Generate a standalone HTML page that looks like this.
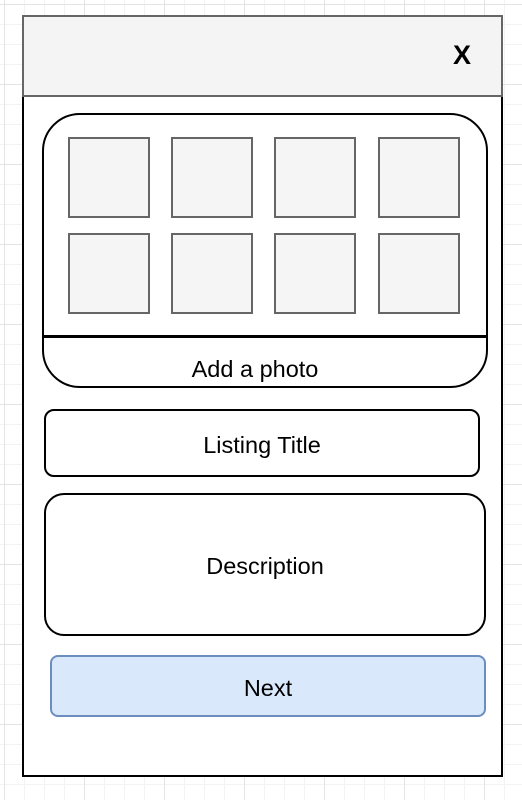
<!DOCTYPE html><html><head><style>
body{margin:0;width:522px;height:800px;position:relative;overflow:hidden;background:#fff;
background-image:linear-gradient(#e4e4e4 1px,transparent 1px),linear-gradient(90deg,#e4e4e4 1px,transparent 1px),linear-gradient(#f3f3f3 1px,transparent 1px),linear-gradient(90deg,#f3f3f3 1px,transparent 1px);
background-size:80px 80px,80px 80px,20px 20px,20px 20px;background-position:4px 4px;font-family:"Liberation Sans",sans-serif;}
div{position:absolute;box-sizing:border-box}
.t{display:flex;align-items:center;justify-content:center;font-size:23.5px;color:#000;padding-top:4px}
.sq{width:82px;height:81px;background:#f5f5f5;border:2px solid #666}
</style></head><body>
<div style="left:22px;top:95px;width:481px;height:682px;border:2px solid #000;background:#fff"></div>
<div style="left:22px;top:15px;width:481px;height:82px;border:2px solid #666;background:#f4f4f4"></div>
<div class="t" style="left:440px;top:36px;width:44px;height:34px;font-weight:bold;font-size:27px">X</div>
<div style="left:42px;top:113px;width:446px;height:275px;border:2px solid #000;border-radius:38px"></div>
<div style="left:43px;top:335px;width:444px;height:3px;background:#000"></div>
<div class="t" style="left:33px;top:352px;width:444px;height:30px">Add a photo</div>
<div class="sq" style="left:68px;top:137px"></div><div class="sq" style="left:171px;top:137px"></div><div class="sq" style="left:274px;top:137px"></div><div class="sq" style="left:378px;top:137px"></div>
<div class="sq" style="left:68px;top:233px"></div><div class="sq" style="left:171px;top:233px"></div><div class="sq" style="left:274px;top:233px"></div><div class="sq" style="left:378px;top:233px"></div>
<div class="t" style="left:44px;top:409px;width:436px;height:68px;border:2px solid #000;border-radius:10px">Listing Title</div>
<div class="t" style="left:44px;top:493px;width:442px;height:143px;border:2px solid #000;border-radius:20px">Description</div>
<div class="t" style="left:50px;top:655px;width:436px;height:62px;border:2px solid #6c8ebf;border-radius:8px;background:#dae8fc">Next</div>
</body></html>
